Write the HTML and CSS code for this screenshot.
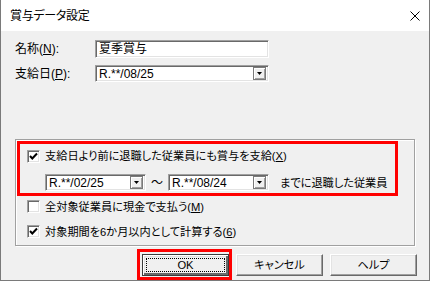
FILE: index.html
```html
<!DOCTYPE html>
<html>

<head>
    <title>賞与データ設定</title>
    <meta charset="utf-8">
    <link rel="stylesheet" href="styles.css">
</head>

<body>
    <div class="window">
        <div class="titlebar">
            <span class="title">賞与データ設定</span>
            <svg class="close" width="10" height="10" viewBox="0 0 10 10">
                <path d="M0.5 0.5 L9.5 9.5 M9.5 0.5 L0.5 9.5" stroke="#000" stroke-width="1" fill="none" />
            </svg>
        </div>

        <div class="client">
            <div class="field">
                <span class="label">名称(<u>N</u>):</span>
                <div class="textbox wide">夏季賞与</div>
            </div>
            <div class="field second">
                <span class="label">支給日(<u>P</u>):</span>
                <div class="combo wide">
                    <span class="value">R.**/08/25</span>
                    <span class="drop"><svg width="5" height="3" viewBox="0 0 5 3"><path d="M0 0 H5 L2.5 3 Z" fill="#000" /></svg></span>
                </div>
            </div>

            <div class="group">
                <div class="mark">
                    <div class="check-row">
                        <span class="checkbox checked"><svg width="9" height="9" viewBox="0 0 9 9"><path d="M1 4 L3.3 6.5 L8 1.5" stroke="#000" stroke-width="2" fill="none" /></svg></span>
                        <span class="text">支給日より前に退職した従業員にも賞与を支給(<u>X</u>)</span>
                    </div>
                    <div class="range">
                        <div class="combo small">
                            <span class="value">R.**/02/25</span>
                            <span class="drop"><svg width="5" height="3" viewBox="0 0 5 3"><path d="M0 0 H5 L2.5 3 Z" fill="#000" /></svg></span>
                        </div>
                        <span class="tilde">～</span>
                        <div class="combo small">
                            <span class="value">R.**/08/24</span>
                            <span class="drop"><svg width="5" height="3" viewBox="0 0 5 3"><path d="M0 0 H5 L2.5 3 Z" fill="#000" /></svg></span>
                        </div>
                        <span class="text after">までに退職した従業員</span>
                    </div>
                </div>

                <div class="check-row out row2">
                    <span class="checkbox"></span>
                    <span class="text">全対象従業員に現金で支払う(<u>M</u>)</span>
                </div>
                <div class="check-row out row3">
                    <span class="checkbox checked"><svg width="9" height="9" viewBox="0 0 9 9"><path d="M1 4 L3.3 6.5 L8 1.5" stroke="#000" stroke-width="2" fill="none" /></svg></span>
                    <span class="text">対象期間を6か月以内として計算する(<u>6</u>)</span>
                </div>
            </div>

            <div class="buttons">
                <div class="mark-btn">
                    <button class="btn default"><span class="focus">OK</span></button>
                </div>
                <button class="btn cancel">キャンセル</button>
                <button class="btn help">ヘルプ</button>
            </div>
        </div>
    </div>
</body>

</html>
```

FILE: styles.css
```css
html,
body {
    margin: 0;
    padding: 0;
    background-color: #f0f0f0;
}

body {
    font-family: "Liberation Sans", "Noto Sans CJK JP", sans-serif;
    font-feature-settings: "palt" 1;
    font-size: 12px;
    line-height: 14px;
    color: #000;
}

.window {
    width: 430px;
    height: 281px;
    box-sizing: border-box;
    border: 1px solid #7a7a7a;
    border-top: none;
    background-color: #f0f0f0;
}

.titlebar {
    height: 31px;
    background-color: #fff;
    display: flex;
    align-items: center;
    padding-left: 9px;
    padding-right: 9px;
}

.title {
    flex: 1;
    font-size: 12px;
    letter-spacing: -0.3px;
}

.close {
    display: block;
}

.client {
    padding: 9px 14px 0 14px;
}

.field {
    display: flex;
    align-items: center;
}

.field.second {
    margin-top: 7px;
}

.label {
    width: 80px;
}

u {
    text-decoration: underline;
    text-underline-offset: 1px;
}

.textbox,
.combo {
    box-sizing: border-box;
    background-color: #fff;
    border: 1px solid;
    border-color: #a0a0a0 #fff #fff #a0a0a0;
    box-shadow: inset 1px 1px 0 #696969, inset -1px -1px 0 #e3e3e3;
    display: flex;
    align-items: center;
    padding-left: 3px;
}

.wide {
    width: 174px;
}

.textbox {
    height: 18px;
}

.combo {
    height: 17px;
    padding-right: 2px;
}

.combo .value {
    flex: 1;
}

.drop {
    box-sizing: border-box;
    width: 13px;
    height: 13px;
    background-color: #f0f0f0;
    border: 1px solid #7a7a7a;
    box-shadow: inset 1px 1px 0 #fff, inset -1px -1px 0 #a0a0a0;
    display: flex;
    align-items: center;
    justify-content: center;
}

.drop svg {
    display: block;
}

.group {
    margin-top: 57px;
    width: 400px;
    height: 107px;
    box-sizing: border-box;
    border: 1px solid #a0a0a0;
    box-shadow: inset 1px 1px 0 #fff, 1px 1px 0 #fff;
    padding: 1px 0 0 1px;
}

.mark {
    width: 381px;
    height: 55px;
    box-sizing: border-box;
    border: 3px solid #f00;
    padding: 5px 0 0 7px;
}

.check-row {
    display: flex;
    align-items: center;
    height: 14px;
}

.check-row.out {
    margin-left: 10px;
    height: 13px;
}

.row2 {
    margin-top: 4px;
}

.row3 {
    margin-top: 12px;
}

.checkbox {
    box-sizing: border-box;
    width: 13px;
    height: 13px;
    background-color: #fff;
    border: 1px solid;
    border-color: #a0a0a0 #fff #fff #a0a0a0;
    box-shadow: inset 1px 1px 0 #696969, inset -1px -1px 0 #e3e3e3;
    display: flex;
    align-items: center;
    justify-content: center;
    flex-shrink: 0;
}

.checkbox svg {
    display: block;
}

.text {
    margin-left: 5px;
    white-space: nowrap;
    font-size: 11.2px;
}

.range {
    display: flex;
    align-items: center;
    margin-top: 11px;
    margin-left: 18px;
}

.small {
    width: 101px;
}

.tilde {
    width: 22px;
    text-align: center;
}

.text.after {
    margin-left: 11px;
}

.buttons {
    display: flex;
    justify-content: flex-end;
    align-items: flex-start;
    margin-top: 3px;
    margin-right: -2px;
}

.mark-btn {
    border: 3px solid #f00;
    padding: 2px 0 1px 2px;
    margin-right: 4px;
}

.btn {
    box-sizing: border-box;
    width: 87px;
    height: 22px;
    margin: 0;
    padding: 0;
    font: inherit;
    font-size: 11.2px;
    font-feature-settings: "palt" 1;
    color: #000;
    background-color: #f0f0f0;
    border: 1px solid;
    border-color: #fff #696969 #696969 #fff;
    box-shadow: inset -1px -1px 0 #a0a0a0, inset 1px 1px 0 #e3e3e3;
    display: flex;
    align-items: center;
    justify-content: center;
}

.btn.cancel {
    margin-top: 5px;
    margin-right: 7px;
}

.btn.help {
    margin-top: 5px;
}

.btn.default {
    border: 1px solid #3c3c3c;
    box-shadow: inset 1px 1px 0 #fff, inset -2px -2px 0 #696969, inset 2px 2px 0 #e3e3e3;
    padding: 3px;
}

.focus {
    flex: 1;
    align-self: stretch;
    border: 1px dotted #000;
    display: flex;
    align-items: center;
    justify-content: center;
}
```
